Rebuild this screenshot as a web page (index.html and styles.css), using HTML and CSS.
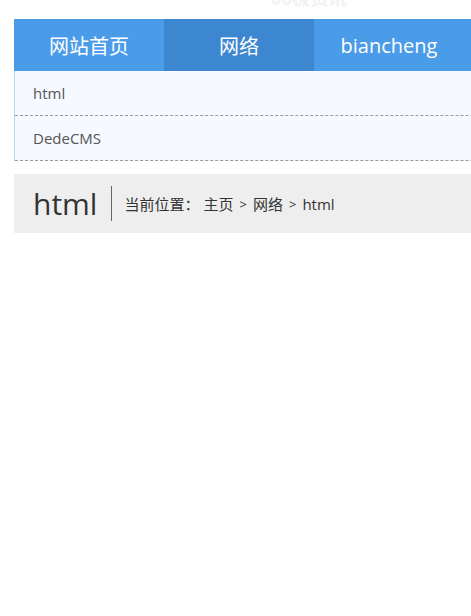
FILE: index.html
```html
<!DOCTYPE html>
<html>
<head>
<meta charset="utf-8">
<link rel="stylesheet" href="styles.css">
</head>
<body>
<div class="page">
  <div class="ghost"><span class="ghost-text">00极资讯</span></div>
  <nav class="menu">
    <a class="tab">网站首页</a>
    <a class="tab active">网络</a>
    <a class="tab">biancheng</a>
  </nav>
  <ul class="sub">
    <li>html</li>
    <li>DedeCMS</li>
  </ul>
  <div class="crumbs">
    <h1 class="title">html</h1>
    <div class="path">
      <span class="label">当前位置：</span>
      <span>主页</span><span class="sep">&gt;</span><span>网络</span><span class="sep">&gt;</span><span>html</span>
    </div>
  </div>
</div>
</body>
</html>
```
FILE: styles.css
```css
html, body {
  margin: 0;
  padding: 0;
  overflow: hidden;
  background: #fff;
}
.page {
  width: 1000px;
  margin-left: 14px;
  font-family: "Open Sans", "Noto Sans CJK SC", sans-serif;
}
.ghost {
  display: flow-root;
  height: 19px;
  padding-left: 257px;
}
.ghost-text {
  display: block;
  margin-top: -12px;
  font-size: 18px;
  font-weight: bold;
  line-height: 19px;
  color: #f2f2f2;
  font-family: "Noto Sans CJK SC", sans-serif;
}
.menu {
  display: flex;
  height: 52px;
  background: #4a9be8;
}
.tab {
  width: 150px;
  display: flex;
  align-items: center;
  justify-content: center;
  color: #fff;
  font-size: 20px;
  font-family: "Open Sans", "Noto Sans CJK SC", sans-serif;
}
.tab.active {
  background: #3d87d0;
}
.sub {
  list-style: none;
  margin: 0;
  padding: 0;
  background: #f6f9ff;
  border-left: 1px solid #b6d2ef;
}
.sub li {
  height: 44px;
  line-height: 44px;
  padding-left: 18px;
  font-size: 15px;
  color: #555;
  border-bottom: 1px dashed #999;
}
.crumbs {
  margin-top: 13px;
  height: 59px;
  background: #eee;
  display: flex;
  align-items: center;
  padding-left: 19px;
}
.title {
  margin: 0;
  font-weight: normal;
  font-size: 30px;
  color: #333;
  padding-right: 14px;
  border-right: 1px solid #666;
  line-height: 35px;
}
.path {
  display: flex;
  align-items: center;
  padding-left: 12px;
  font-size: 15px;
  color: #333;
}
.label {
  margin-right: 4px;
}
.sep {
  margin: 0 6px;
  font-size: 13px;
}
```
